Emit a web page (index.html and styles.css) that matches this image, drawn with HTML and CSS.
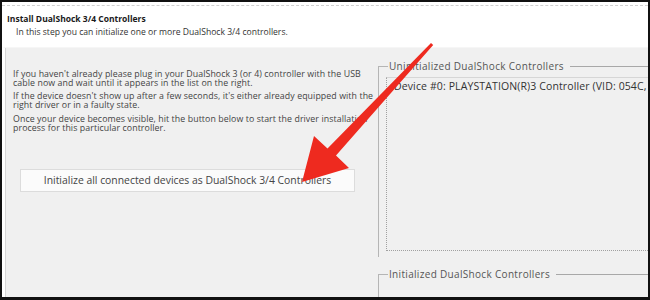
FILE: index.html
```html
<!DOCTYPE html>
<html>
<head>
<meta charset="utf-8">
<link rel="stylesheet" href="styles.css">
</head>
<body>
<div class="window">
  <div class="header">
    <div class="dash"></div>
    <div class="title">Install DualShock 3/4 Controllers</div>
    <div class="subtitle">In this step you can initialize one or more DualShock 3/4 controllers.</div>
  </div>
  <div class="content">
    <div class="left">
      <p>If you haven't already please plug in your DualShock 3 (or 4) controller with the USB<br>cable now and wait until it appears in the list on the right.</p>
      <p>If the device doesn't show up after a few seconds, it's either already equipped with the<br>right driver or in a faulty state.</p>
      <p>Once your device becomes visible, hit the button below to start the driver installation<br>process for this particular controller.</p>
      <button class="init-btn">Initialize all connected devices as DualShock 3/4 Controllers</button>
    </div>
    <div class="right">
      <div class="group group-uninit">
        <div class="legend"><span class="legend-text">Uninitialized DualShock Controllers</span><span class="legend-line"></span></div>
        <div class="listbox">
          <div class="item">Device #0: PLAYSTATION(R)3 Controller (VID: 054C, PID: 0268)</div>
        </div>
      </div>
      <div class="group group-init">
        <div class="legend"><span class="legend-text">Initialized DualShock Controllers</span><span class="legend-line"></span></div>
      </div>
    </div>
  </div>
  <svg class="arrow" width="650" height="300" viewBox="0 0 650 300">
    <polygon fill="#ee2a1f" points="433.2,45 336,155.5 349,168 302,182 314,136 327.5,148.5 431,43"/>
  </svg>
</div>
</body>
</html>
```
FILE: styles.css
```css
html, body {
  margin: 0;
  padding: 0;
}
body {
  width: 650px;
  height: 300px;
  overflow: hidden;
  font-family: "Open Sans", "Noto Sans", sans-serif;
  color: #3a3a3a;
}
.window {
  position: relative;
  width: 650px;
  height: 300px;
  box-sizing: border-box;
  border-top: 2px solid #111;
  border-left: 2px solid #111;
  border-right: 2px solid #111;
  border-bottom: 3px solid #111;
  display: flex;
  flex-direction: column;
  background: #f0f0f0;
  overflow: hidden;
}
.header {
  background: #fff;
  height: 45px;
  box-sizing: border-box;
  padding-top: 3px;
  flex: none;
}
.dash {
  border-top: 1px dashed #d0d0d0;
}
.title {
  font-weight: 700;
  font-size: 8.5px;
  color: #1a1a1a;
  margin: 8px 0 0 5px;
  line-height: 10px;
}
.subtitle {
  font-size: 8.6px;
  color: #333;
  margin: 3px 0 0 14px;
  line-height: 10px;
}
.content {
  flex: 1;
  display: flex;
  background: #f0f0f0;
  border-top: 1px solid #f6f6f6;
  border-left: 3px solid #fff;
  box-shadow: inset 1px 0 0 #d6d6d6;
}
.left {
  width: 373px;
  flex: none;
  box-sizing: border-box;
  padding: 21.5px 0 0 8px;
  font-size: 8.8px;
  letter-spacing: 0.08px;
  line-height: 9px;
  color: #444;
}
.left p {
  margin: 0 0 4.5px 0;
  white-space: nowrap;
}
.left p:last-of-type {
  margin-bottom: 0;
}
.init-btn {
  display: block;
  margin: 36px 0 0 7px;
  width: 335px;
  height: 23px;
  background: #fbfbfb;
  border: 1px solid #dcdcdc;
  font-family: inherit;
  font-size: 10.4px;
  color: #444;
  padding: 0;
}
.right {
  flex: 1;
  display: flex;
  flex-direction: column;
  min-width: 0;
}
.group {
  border-left: 1px solid #b5b5b5;
  position: relative;
}
.group-uninit {
  margin-top: 18px;
  height: 191px;
}
.group-init {
  margin-top: 17px;
  flex: 1;
}
.legend {
  display: flex;
  align-items: center;
  height: 0;
}
.legend::before {
  content: "";
  width: 9px;
  border-top: 1px solid #b5b5b5;
  flex: none;
}
.legend-text {
  font-size: 10px;
  letter-spacing: 0.32px;
  color: #555;
  padding: 0 6px 0 1px;
  white-space: nowrap;
}
.legend-line {
  flex: 1;
  border-top: 1px solid #a8a8a8;
}
.listbox {
  margin: 11px 0 0 7px;
  height: 172px;
  border-top: 1px solid #d6d6d6;
  border-left: 1px dotted #a0a0a0;
  border-bottom: 1px dotted #a0a0a0;
  overflow: hidden;
}
.item {
  font-size: 10.5px;
  letter-spacing: 0.12px;
  color: #333;
  white-space: nowrap;
  padding: 2px 0 0 7px;
  line-height: 12px;
}
.arrow {
  position: absolute;
  left: -2px;
  top: -2px;
  pointer-events: none;
}
```
